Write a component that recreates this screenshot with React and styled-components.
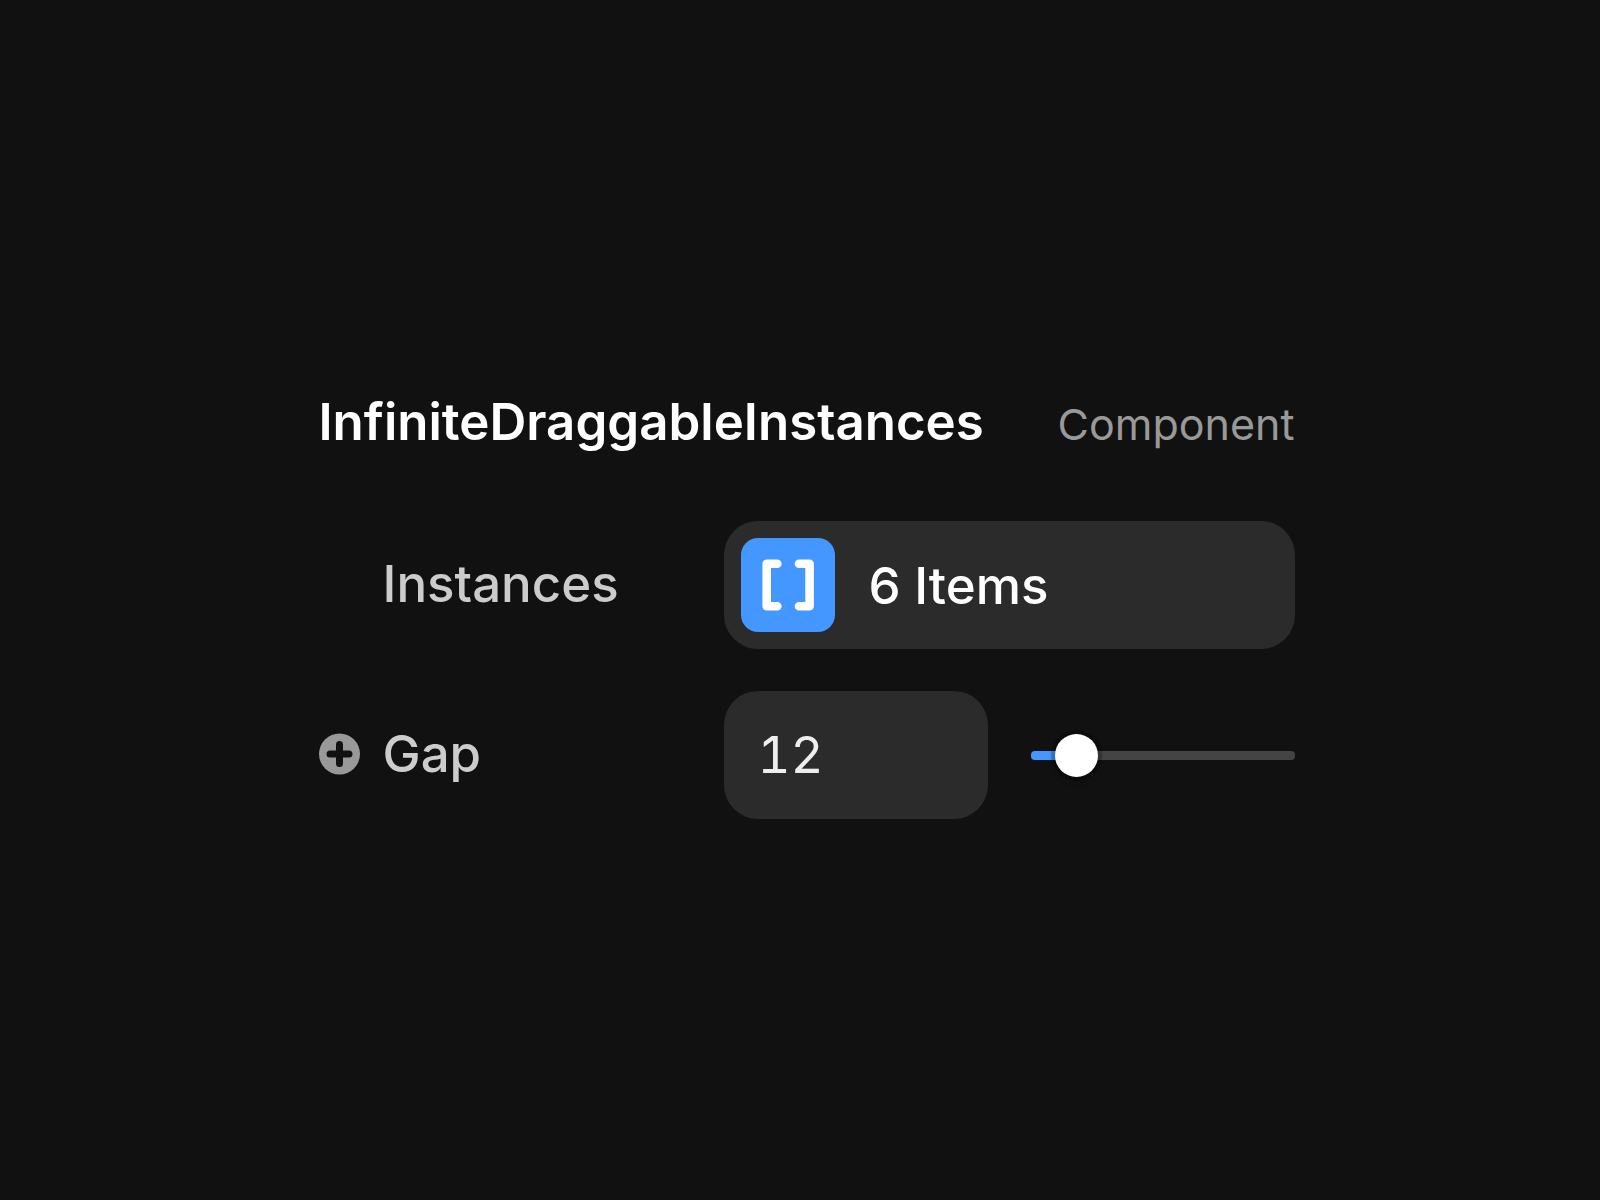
import React, { useState } from "react";
import styled, { createGlobalStyle } from "styled-components";

const GlobalStyle = createGlobalStyle`
  *, *::before, *::after {
    box-sizing: border-box;
  }

  body {
    margin: 0;
    background: #111111;
    color: #ffffff;
    font-family: Inter, "Liberation Sans", sans-serif;
    -webkit-font-smoothing: antialiased;
  }
`;

const Page = styled.main`
  min-height: 100vh;
  display: flex;
  align-items: center;
  justify-content: center;
  padding: 9px 0 0 13px;
`;

const Panel = styled.section`
  width: 100%;
  max-width: 976px;
  display: flex;
  flex-direction: column;
  gap: 42px;
`;

const Header = styled.header`
  display: flex;
  align-items: baseline;
  justify-content: space-between;
  margin-bottom: 23px;
`;

const Title = styled.h1`
  margin: 0;
  font-size: 51px;
  line-height: 64px;
  font-weight: 600;
`;

const Kind = styled.span`
  color: #999999;
  font-size: 43px;
  line-height: 64px;
`;

const Row = styled.div`
  display: grid;
  grid-template-columns: 405fr 571fr;
  align-items: center;
`;

const LabelCell = styled.div`
  display: grid;
  grid-template-columns: 42px 1fr;
  column-gap: 22px;
  align-items: center;
  padding-bottom: 2px;
`;

const Label = styled.label`
  grid-column: 2;
  color: #cccccc;
  font-size: 51px;
  line-height: 64px;
  font-weight: 500;
`;

const AddButton = styled.button`
  display: flex;
  padding: 0;
  border: 0;
  background: none;
  color: #999999;
  cursor: pointer;

  svg {
    width: 42px;
    height: 42px;
  }
`;

const ItemsButton = styled.button`
  height: 128px;
  display: flex;
  align-items: center;
  gap: 34px;
  padding: 0 17px;
  border: 0;
  border-radius: 34px;
  background: #2b2b2b;
  color: #ffffff;
  font-family: inherit;
  font-size: 51px;
  line-height: 64px;
  font-weight: 500;
  cursor: pointer;
`;

const ItemsCount = styled.span`
  padding-top: 2px;
`;

const IconTile = styled.span`
  display: flex;
  border-radius: 17px;
  background: #4497ff;

  svg {
    width: 94px;
    height: 94px;
  }
`;

const Controls = styled.div`
  display: grid;
  grid-template-columns: 1fr 1fr;
  column-gap: 43px;
  align-items: center;
`;

const NumberInput = styled.input`
  width: 100%;
  height: 128px;
  padding: 0 34px 2px;
  border: 0;
  border-radius: 34px;
  outline: none;
  background: #2b2b2b;
  color: #eeeeee;
  font-family: inherit;
  font-size: 51px;
  line-height: 64px;
  font-feature-settings: "tnum";
`;

const Slider = styled.input`
  appearance: none;
  width: 100%;
  height: 44px;
  margin: 0;
  background: none;
  cursor: pointer;

  &::-webkit-slider-runnable-track {
    height: 9px;
    border-radius: 4px;
    background: linear-gradient(
      to right,
      #4497ff var(--filled),
      #444444 var(--filled)
    );
  }

  &::-webkit-slider-thumb {
    appearance: none;
    width: 43px;
    height: 43px;
    margin-top: -17px;
    border-radius: 50%;
    background: #ffffff;
    box-shadow: 0 4px 8px rgba(0, 0, 0, 0.2), 0 0 0 4px rgba(0, 0, 0, 0.2);
  }
`;

const BracketsIcon = () => (
  <svg viewBox="0 0 94 94" fill="none" stroke="#ffffff" strokeWidth="8.6"
    strokeLinecap="round" strokeLinejoin="round" aria-hidden="true">
    <path d="M36.3 25.8H25.7V68.2H36.3" />
    <path d="M58 25.8H68.6V68.2H58" />
  </svg>
);

const PlusIcon = () => (
  <svg viewBox="0 0 42 42" aria-hidden="true">
    <circle cx="20.5" cy="21" r="20.5" fill="currentColor" />
    <path d="M20.5 11.5V30.5M11 21H30" stroke="#111111" strokeWidth="7" strokeLinecap="round" />
  </svg>
);

export default function App() {
  const [gap, setGap] = useState(12);

  const changeGap = (e) => setGap(Number(e.target.value) || 0);

  return (
    <>
      <GlobalStyle />
      <Page>
        <Panel>
          <Header>
            <Title>InfiniteDraggableInstances</Title>
            <Kind>Component</Kind>
          </Header>

          <Row>
            <LabelCell>
              <Label htmlFor="instances">Instances</Label>
            </LabelCell>
            <ItemsButton id="instances" type="button">
              <IconTile><BracketsIcon /></IconTile>
              <ItemsCount>6 Items</ItemsCount>
            </ItemsButton>
          </Row>

          <Row>
            <LabelCell>
              <AddButton type="button" aria-label="Add variable"><PlusIcon /></AddButton>
              <Label htmlFor="gap">Gap</Label>
            </LabelCell>
            <Controls>
              <NumberInput id="gap" inputMode="numeric" value={gap} onChange={changeGap} />
              <Slider
                type="range"
                min="1"
                max="100"
                aria-label="Gap"
                value={gap}
                onChange={changeGap}
                style={{ "--filled": `${gap}%` }}
              />
            </Controls>
          </Row>
        </Panel>
      </Page>
    </>
  );
}
